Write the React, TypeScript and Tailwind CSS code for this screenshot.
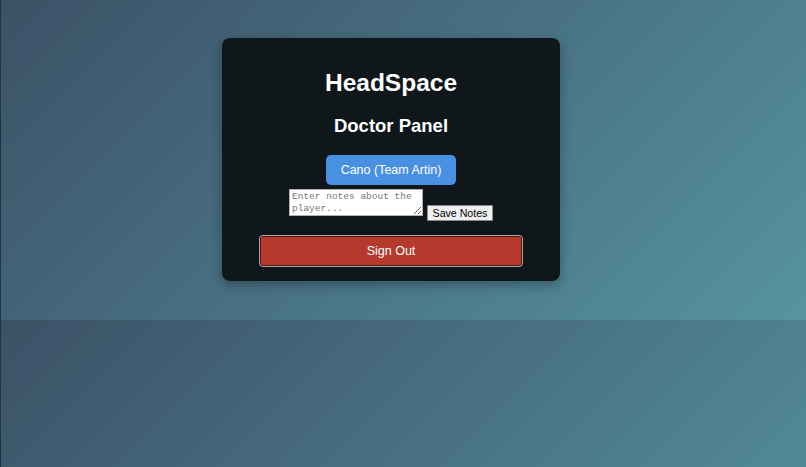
import React from "react";

export default function App() {
  return (
    <div
      className="min-h-[467px] w-full border-l border-[#22353f] bg-[linear-gradient(135deg,#3b5166,#5693a0)] bg-[length:100%_320px] bg-repeat"
      style={{ fontFamily: '"Liberation Sans", Arial, sans-serif' }}
    >
      <div className="flex justify-center pr-[25px] pt-[38px]">
        <div className="flex w-[338px] flex-col items-center rounded-lg bg-[#0f171a] pt-[31px] pb-[14px] shadow-[0_4px_12px_rgba(0,0,0,0.3)]">
          <h1 className="text-[24.5px] font-bold leading-[28px] text-white">HeadSpace</h1>
          <h2 className="mt-[18px] text-[18.5px] font-bold leading-[22px] text-white">Doctor Panel</h2>
          <button className="mt-[18px] h-[30px] w-[130px] rounded-[5px] bg-[#4a90e2] text-[12.5px] text-white">
            Cano (Team Artin)
          </button>
          <div className="mt-[4px] flex items-start gap-[4px]">
            <textarea
              placeholder="Enter notes about the player..."
              className="h-[27px] w-[134px] resize border border-[#b0b0b0] bg-white px-[2px] py-[1px] text-[9.5px] leading-[12px] text-black placeholder:text-[#777]"
              style={{ fontFamily: '"Liberation Mono", "DejaVu Sans Mono", monospace' }}
            />
            <button className="mt-[16px] h-[16px] w-[66px] border border-[#8a8a8a] bg-[#efefef] text-[10.6px] leading-[14px] text-black">
              Save Notes
            </button>
          </div>
          <button className="mt-[14px] h-[32px] w-[264px] rounded-[4px] border border-[#a8a8a8] bg-[#b5392d] text-[12.5px] text-white shadow-[inset_0_0_0_1px_#4a1712]">
            Sign Out
          </button>
        </div>
      </div>
    </div>
  );
}
